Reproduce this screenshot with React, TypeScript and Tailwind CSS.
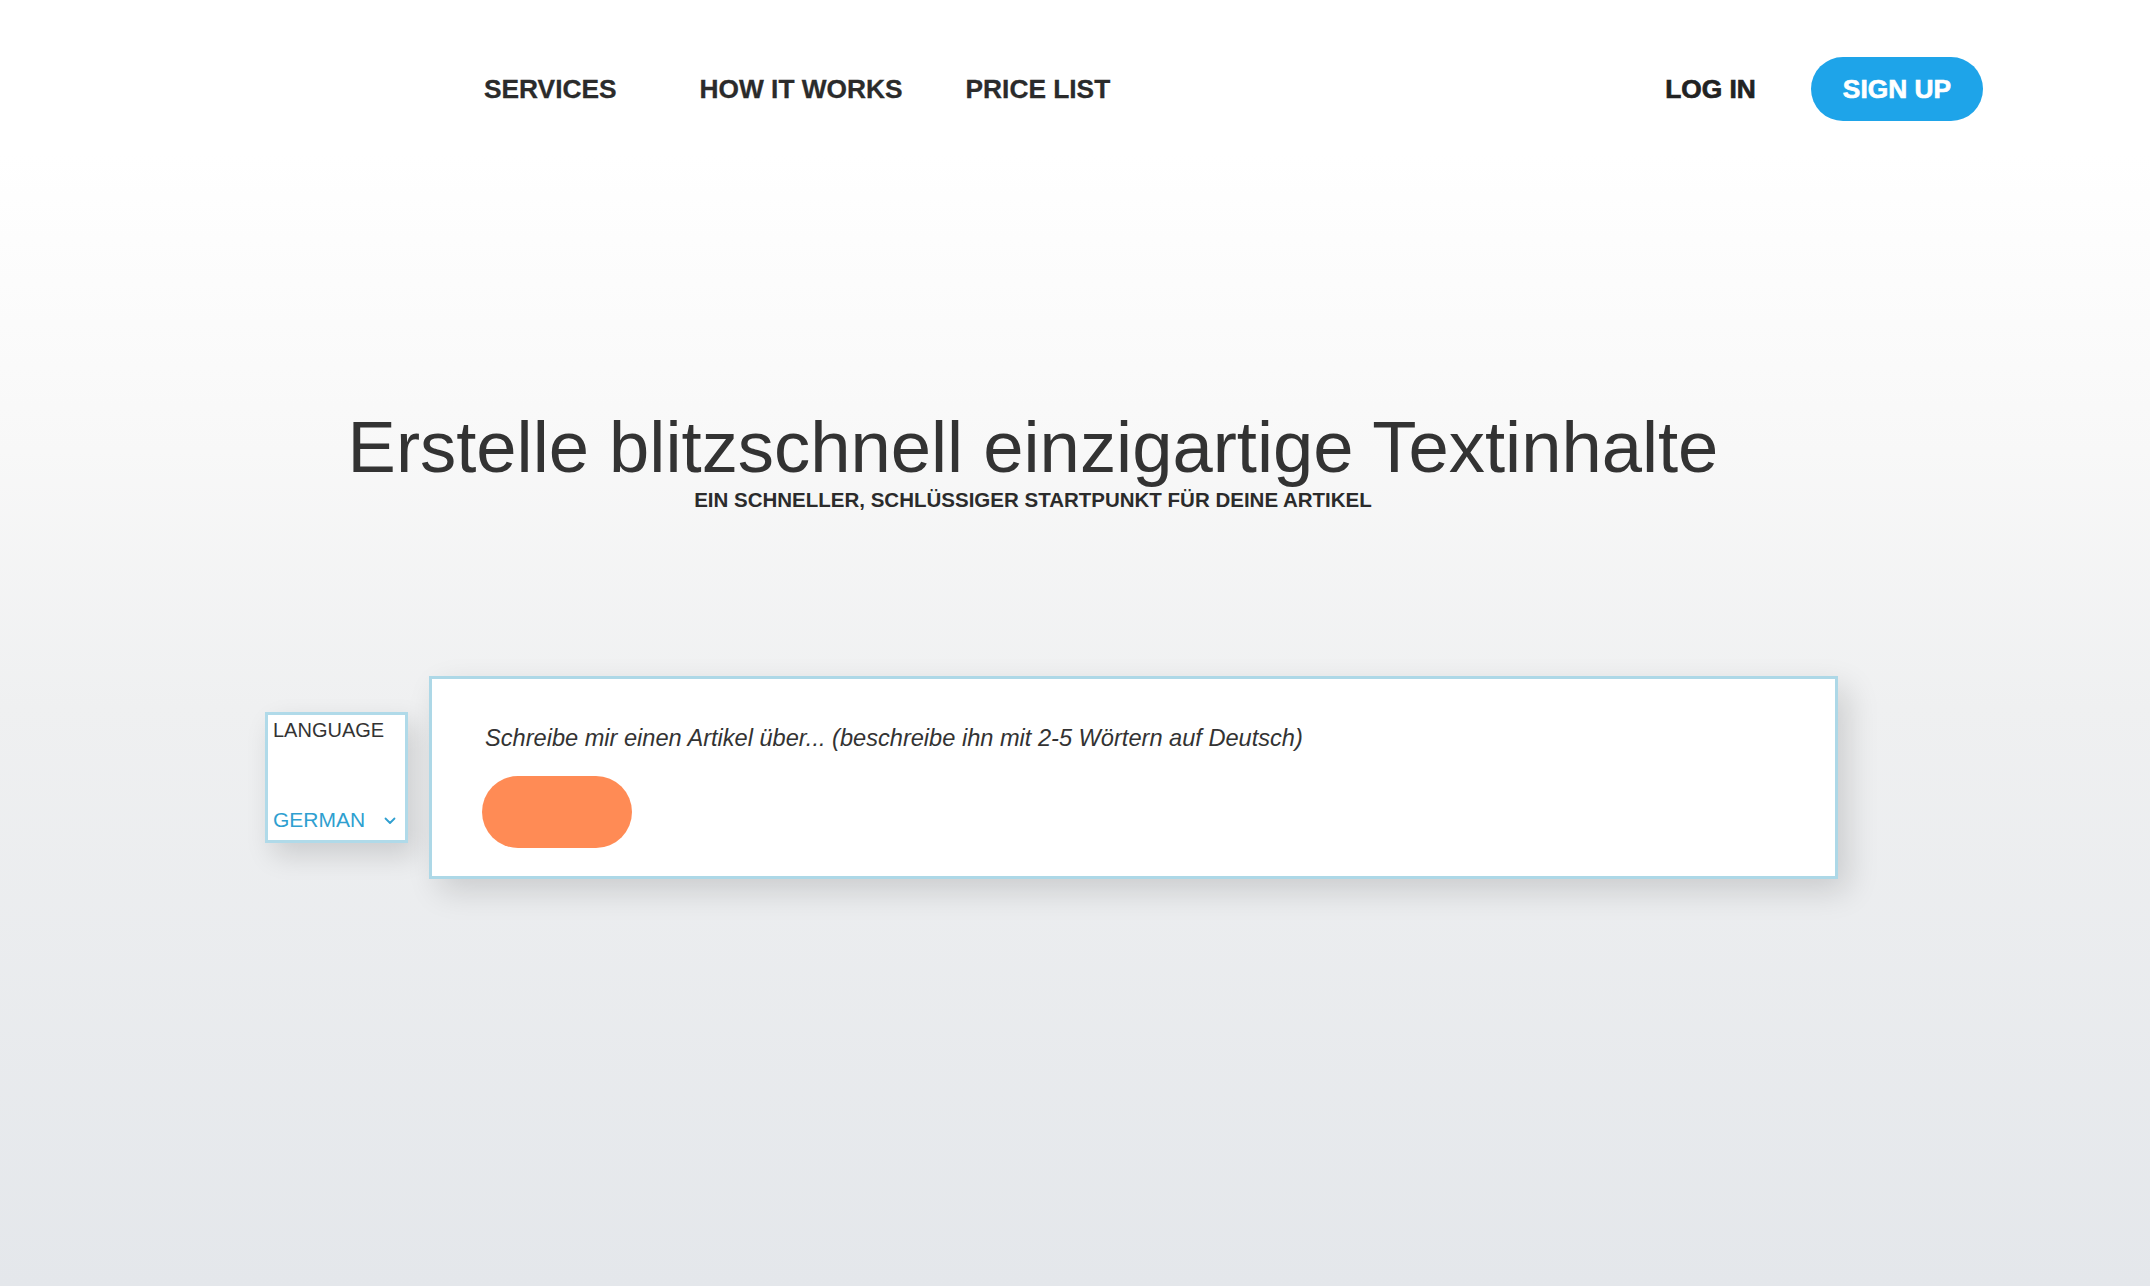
import React from "react";

export default function App() {
  return (
    <div className="min-h-screen w-full bg-[linear-gradient(to_bottom,#ffffff_12%,#f8f8f8_35%,#eff0f1_55%,#e4e7eb_100%)] font-['Liberation_Sans',Arial,sans-serif]">
      <header className="flex items-center justify-between pl-[484px] pr-[167px] pt-[57px]">
        <nav className="flex items-center text-[26.3px] font-bold leading-none text-[#2b2b2b] [-webkit-text-stroke:0.3px_#2b2b2b]">
          <a className="cursor-pointer">SERVICES</a>
          <a className="ml-[83px] cursor-pointer">HOW IT WORKS</a>
          <a className="ml-[63px] cursor-pointer">PRICE LIST</a>
        </nav>
        <div className="flex items-center">
          <a className="cursor-pointer text-[26.3px] font-bold leading-none text-[#222] [-webkit-text-stroke:0.7px_#222]">
            LOG IN
          </a>
          <button className="ml-[55px] flex h-[64px] items-center rounded-full bg-[#1ea4e9] px-[32px] text-[26.3px] font-bold leading-none text-white [-webkit-text-stroke:0.7px_#ffffff]">
            SIGN UP
          </button>
        </div>
      </header>

      <section className="mt-[290px] flex flex-col items-center pr-[84px]">
        <h1 className="text-[72.4px] font-normal leading-[72px] text-[#333333]">
          Erstelle blitzschnell einzigartige Textinhalte
        </h1>
        <p className="mt-[5px] text-[20.5px] font-bold leading-[24px] text-[#2b2b2b]">
          EIN SCHNELLER, SCHLÜSSIGER STARTPUNKT FÜR DEINE ARTIKEL
        </p>
      </section>

      <section className="mt-[164px] flex items-center pl-[265px]">
        <div className="flex h-[131px] w-[143px] flex-col justify-between border-[3px] border-[#b0dae9] bg-white pb-[8px] pl-[5px] pr-[9px] pt-[3px] shadow-[8px_12px_26px_rgba(0,0,0,0.14)]">
          <div className="text-[20px] leading-[24px] text-[#333333]">LANGUAGE</div>
          <div className="flex items-center justify-between">
            <span className="text-[21px] leading-[24px] text-[#2f9fd0]">GERMAN</span>
            <svg width="12" height="8" viewBox="0 0 12 8" fill="none" className="mt-[1px]">
              <polyline
                points="1.5,1.5 6,6 10.5,1.5"
                stroke="#2f9fd0"
                strokeWidth="1.8"
                strokeLinecap="round"
                strokeLinejoin="round"
              />
            </svg>
          </div>
        </div>

        <div className="ml-[21px] flex h-[203px] w-[1409px] flex-col border-[3px] border-[#add8e7] bg-white pl-[50px] pt-[45px] shadow-[10px_12px_30px_rgba(0,0,0,0.14)]">
          <div className="pl-[3px] text-[23.6px] italic leading-[28px] text-[#333333]">
            Schreibe mir einen Artikel über... (beschreibe ihn mit 2-5 Wörtern auf Deutsch)
          </div>
          <button className="mt-[24px] h-[72px] w-[150px] rounded-full bg-[#ff8b55]" />
        </div>
      </section>
    </div>
  );
}
